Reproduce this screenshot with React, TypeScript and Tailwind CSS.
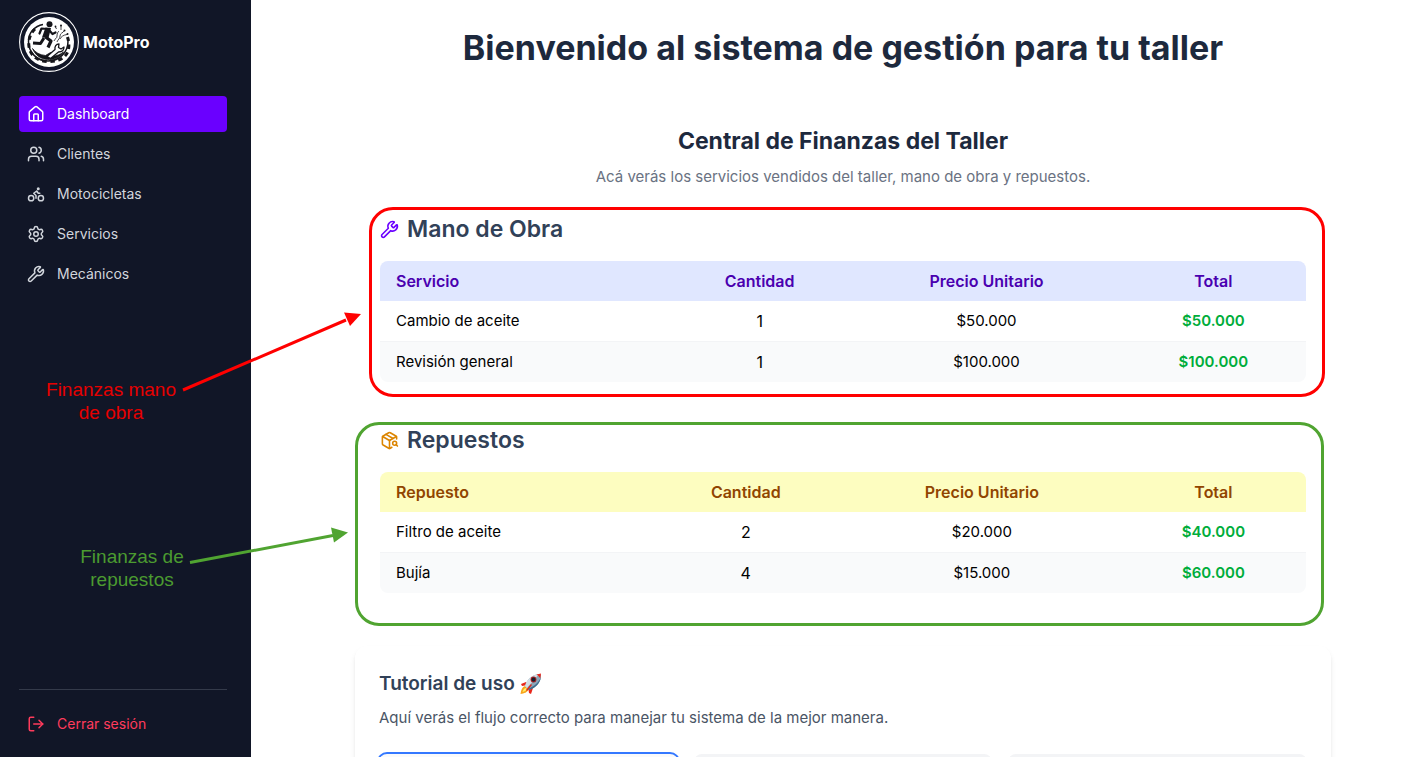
import type { ReactNode } from "react";
import { Bike, House, LogOut, PackageSearch, Settings, Users, Wrench } from "lucide-react";

type Row = { name: string; qty: number; price: string; total: string };

const navItems = [
  { label: "Dashboard", Icon: House, active: true },
  { label: "Clientes", Icon: Users, active: false },
  { label: "Motocicletas", Icon: Bike, active: false },
  { label: "Servicios", Icon: Settings, active: false },
  { label: "Mecánicos", Icon: Wrench, active: false },
];

const labor: Row[] = [
  { name: "Cambio de aceite", qty: 1, price: "$50.000", total: "$50.000" },
  { name: "Revisión general", qty: 1, price: "$100.000", total: "$100.000" },
];

const parts: Row[] = [
  { name: "Filtro de aceite", qty: 2, price: "$20.000", total: "$40.000" },
  { name: "Bujía", qty: 4, price: "$15.000", total: "$60.000" },
];

function Logo() {
  return (
    <svg viewBox="0 0 60 60" className="size-15 shrink-0" role="img" aria-label="MotoPro">
      <circle cx="30" cy="30" r="29.4" fill="none" stroke="#fff" strokeWidth="1.1" />
      <circle cx="30" cy="30" r="25" fill="#fff" />
      <g fill="none" stroke="#15151a" strokeLinejoin="round">
        <path d="M24 12.500C16 14 9.500 20 9.500 29.500c0 11 8.500 19.500 19.500 19.500s20-8.500 20-19.500l-.5-4" strokeWidth="1.500" />
        <path d="M16 17C5 27 8 49.500 29 49.500S52 36 48.500 25" strokeWidth="3" strokeDasharray="4.500 3.500" />
        <path d="M13.500 36.500c3 4 7 6.500 13 7l5-3c2 1 3 2 2 3.500 4 0 8-1.500 11-4-4 6-10 8-16 7.500-7-.5-12-4-15-11Z" fill="#15151a" strokeWidth="0.800" />
        <path d="M28 44.500l8-7c-.5-3 1-5.500 4-5.500l-.5 3.500 2.500 1.500 3-2c0 3.500-2.500 5-5.500 5l-8 6.500Z" fill="#fff" strokeWidth="1.300" />
        <path d="M26.500 25l5.500 4-3 6.500" strokeWidth="3.200" />
        <path d="M25 26l-3.500 5.500L14 31" strokeWidth="3" />
        <path d="M28.500 17l-6-.5-2 5" strokeWidth="2.200" strokeLinecap="round" />
        <path d="M30 18l3.500 4 3-1.500" strokeWidth="2.200" strokeLinecap="round" />
        <path d="M35 29c1-3 3-2 3-5s1-4 2-5M38 30c1-3 3-3 3-6s3-3 4-5M41 27c1-2 3-4 7-4.500M37.500 17l-1-2M42 18v-4" strokeWidth="0.800" />
      </g>
      <g fill="#15151a">
        <circle cx="30.500" cy="12.200" r="3" />
        <path d="M26.500 15.500l5.500.5-2.500 10-6.500-.5Z" />
        <circle cx="36.500" cy="14.500" r="0.900" />
        <circle cx="42" cy="13.500" r="1" />
        <circle cx="45.500" cy="18.500" r="1" />
        <circle cx="48.500" cy="22" r="1" />
      </g>
    </svg>
  );
}

function Rocket() {
  return (
    <svg viewBox="0 0 24 24" className="size-6" role="img" aria-label="cohete">
      <path d="M7 10 2 12l1 2 6-1zM14 16l-2 6-2-1-1-6z" fill="#e8271b" />
      <path d="M6 14c-3 1-4 4-4.500 8C5 21.500 8.500 20.500 9.500 17z" fill="#f8a51b" />
      <path d="M6.500 16c-2 1-2.500 2.500-3 4 2-.5 3.500-1 4.500-3z" fill="#fff06a" />
      <path d="M6 14C8 7 13 3 20 2l2 1c0 7-4 12-12 15z" fill="#8ba6b8" />
      <path d="M6 14C8 7 13 3 20 2L8 16z" fill="#d3dee5" />
      <path d="M17.500 2.500 22 1.500l-.7 5c-1-2-2.200-3-3.800-4z" fill="#e8271b" />
      <path d="M22 5c-1 6-5 11-12 13l-1-1c7-3 11-7 13-12z" fill="#3c6c8d" />
      <circle cx="14.500" cy="7.500" r="2.900" fill="#a51d20" />
      <circle cx="14.500" cy="7.500" r="1.900" fill="#15222d" />
      <path d="m7 18 5-6 1 1-5 6z" fill="#df2518" />
    </svg>
  );
}

function Sidebar() {
  return (
    <aside className="flex w-[251px] shrink-0 flex-col bg-[#111627] pt-3 pr-6 pb-[15px] pl-[19px] text-sm">
      <div className="flex items-center gap-1">
        <Logo />
        <span className="text-base font-bold text-white">MotoPro</span>
      </div>
      <nav className="mt-6 flex flex-col gap-1">
        {navItems.map(({ label, Icon, active }) => (
          <a
            key={label}
            href="#"
            className={
              active
                ? "flex h-9 items-center gap-3 rounded bg-[#6a00ff] px-2 text-white"
                : "flex h-9 items-center gap-3 rounded px-2 text-gray-300"
            }
          >
            <Icon size={18} />
            {label}
          </a>
        ))}
      </nav>
      <div className="mt-auto border-t border-[#343a4a] pt-4">
        <button type="button" className="flex h-9 w-full items-center gap-3 px-2 text-[#ff3b5c]">
          <LogOut size={18} />
          Cerrar sesión
        </button>
      </div>
    </aside>
  );
}

type FinanceProps = {
  title: string;
  icon: ReactNode;
  firstColumn: string;
  rows: Row[];
  headClass: string;
  widths: string[];
};

function FinanceTable({ title, icon, firstColumn, rows, headClass, widths }: FinanceProps) {
  return (
    <>
      <h3 className="mb-4 flex items-center gap-2 text-[23px] leading-8 font-semibold text-slate-700">
        {icon}
        {title}
      </h3>
      <div className="overflow-hidden rounded-lg">
        <table className="w-full table-fixed">
          <thead className={headClass}>
            <tr>
              {[firstColumn, "Cantidad", "Precio Unitario", "Total"].map((label, i) => (
                <th
                  key={label}
                  scope="col"
                  className={`${widths[i]} px-4 py-2 font-semibold ${i === 0 ? "text-left" : "text-center"}`}
                >
                  {label}
                </th>
              ))}
            </tr>
          </thead>
          <tbody className="text-center text-black">
            {rows.map((row) => (
              <tr key={row.name} className="border-b border-gray-100 last:border-0 even:bg-gray-50">
                <td className="px-4 py-2 text-left text-[15px] leading-6">{row.name}</td>
                <td className="px-4 py-2">{row.qty}</td>
                <td className="px-4 py-2 text-[15px] leading-6">{row.price}</td>
                <td className="px-4 py-2 text-[15px] leading-6 font-semibold text-[#00ad3b]">
                  {row.total}
                </td>
              </tr>
            ))}
          </tbody>
        </table>
      </div>
    </>
  );
}

function Annotations() {
  return (
    <>
      <svg className="pointer-events-none absolute top-0 left-0" width="400" height="600" aria-hidden="true">
        <path d="M183 390 346 320" stroke="#ff0000" strokeWidth="3" />
        <path d="M361 314 344 312.500 350 326Z" fill="#ff0000" />
        <path d="M190 562.500 333 535.500" stroke="#50a431" strokeWidth="3" />
        <path d="M348 532.500 331 527.500 334 542.500Z" fill="#50a431" />
      </svg>
      <p className="absolute top-[378px] left-[36px] w-[150px] text-center font-['Liberation_Sans',sans-serif] text-[19px] leading-[23px] text-[#e60000]">
        Finanzas mano
        <br />
        de obra
      </p>
      <p className="absolute top-[545px] left-[57px] w-[150px] text-center font-['Liberation_Sans',sans-serif] text-[19px] leading-[23px] text-[#4b9b30]">
        Finanzas de
        <br />
        repuestos
      </p>
    </>
  );
}

export default function App() {
  return (
    <div className="relative flex h-screen overflow-hidden bg-white font-['Inter',sans-serif]">
      <Sidebar />
      <main className="min-w-0 flex-1 overflow-hidden pt-7 pl-[27px]">
        <h1 className="text-center text-[34px] leading-10 font-bold text-slate-800">
          Bienvenido al sistema de gestión para tu taller
        </h1>
        <div className="mx-auto mt-8 max-w-5xl px-6">
          <div className="px-[25px] pt-[25px]">
            <header className="mb-6 text-center">
              <h2 className="text-[23px] leading-8 font-bold text-slate-800">
                Central de Finanzas del Taller
              </h2>
              <p className="mt-2 text-[15px] leading-6 text-gray-500">
                Acá verás los servicios vendidos del taller, mano de obra y repuestos.
              </p>
            </header>
            <section className="relative mb-[42px]">
              <FinanceTable
                title="Mano de Obra"
                icon={<Wrench size={19} className="text-[#6a00ff]" />}
                firstColumn="Servicio"
                rows={labor}
                headClass="bg-indigo-100 text-[#4a00b0]"
                widths={["w-[31%]", "w-[20%]", "w-[29%]", "w-[20%]"]}
              />
              <div className="pointer-events-none absolute -top-[6px] -right-[19px] -bottom-[15px] -left-[11px] rounded-3xl border-3 border-[#ff0000]" />
            </section>
            <section className="relative">
              <FinanceTable
                title="Repuestos"
                icon={<PackageSearch size={19} className="text-[#dc8500]" />}
                firstColumn="Repuesto"
                rows={parts}
                headClass="bg-[#fdfdc0] text-[#914500]"
                widths={["w-[29%]", "w-[21%]", "w-[30%]", "w-[20%]"]}
              />
              <div className="pointer-events-none absolute -top-[2px] -right-[18px] -bottom-[33px] -left-[25px] rounded-3xl border-3 border-[#50a431]" />
            </section>
          </div>
          <section className="mt-[53px] rounded-xl bg-white p-6 shadow-md">
            <h2 className="flex items-center gap-1 text-[19px] leading-7 font-semibold text-slate-700">
              Tutorial de uso
              <Rocket />
            </h2>
            <p className="mt-2 mb-6 text-[15px] leading-6 text-gray-600">
              Aquí verás el flujo correcto para manejar tu sistema de la mejor manera.
            </p>
            <div className="grid grid-cols-3 gap-4">
              <div className="h-32 rounded-lg bg-gray-50 ring-2 ring-[#3478ff]" />
              <div className="h-32 rounded-lg bg-gray-100" />
              <div className="h-32 rounded-lg bg-gray-100" />
            </div>
          </section>
        </div>
      </main>
      <Annotations />
    </div>
  );
}
